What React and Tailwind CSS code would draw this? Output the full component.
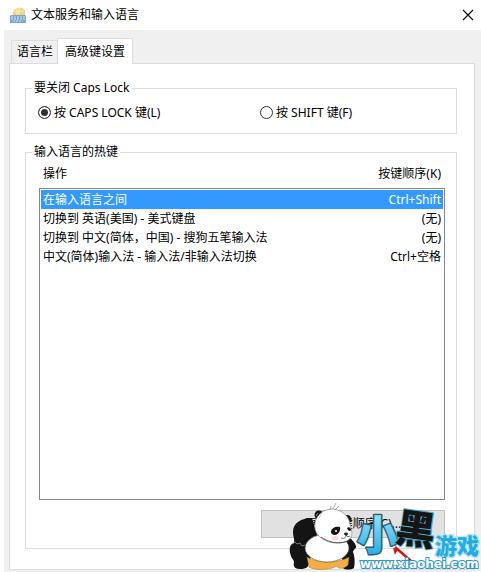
import { useState } from 'react';
import clsx from 'clsx';

const TABS = ['语言栏', '高级键设置'];

const HOTKEYS = [
  { action: '在输入语言之间', keys: 'Ctrl+Shift' },
  { action: '切换到 英语(美国) - 美式键盘', keys: '(无)' },
  { action: '切换到 中文(简体，中国) - 搜狗五笔输入法', keys: '(无)' },
  { action: '中文(简体)输入法 - 输入法/非输入法切换', keys: 'Ctrl+空格' },
];

function KeyboardIcon() {
  return (
    <svg width="17" height="17" viewBox="0 0 17 17" aria-hidden="true">
      <path d="M3 8c-1-4 2-7 6-7 4-1 7 2 6 7z" fill="#f3d27c" />
      <path d="M4 5l10-1M9 1v7M6 2c2 2 2 4 0 6" stroke="#fdf0c0" fill="none" />
      <path d="M0 9l1-1h14l1 1v7H0z" fill="#7ba6cc" />
      <path d="M1 10h14M1 12h14M3 14h10" stroke="#cfe3f4" strokeDasharray="2 1" />
    </svg>
  );
}

function Radio({ value, checked, onChange, children }) {
  return (
    <label className="flex h-[17px] items-center gap-[3px]">
      <input
        type="radio"
        name="caps"
        value={value}
        checked={checked}
        onChange={() => onChange(value)}
        className="size-[13px] appearance-none rounded-full border border-[#333] bg-white checked:bg-[#333] checked:shadow-[inset_0_0_0_2px_white]"
      />
      {children}
    </label>
  );
}

function Panda() {
  return (
    <g>
      <path d="M24 17C13 17 5 22 5 31c0 5 2 8 1 11-5 1-5 8-3 13 1 3 3 4 3 6-1 4 0 7 6 7 7 0 9-2 9-8L31 40z" fill="#141414" />
      <path d="M58 36c5 0 9 6 10 9 1 2-3 4-3 6 2 5 2 12 1 16-3 2-9 2-11 0L53 45z" fill="#141414" />
      <path d="M4 43l3-2 2 2 3-1 2 3 3-1" stroke="#999" strokeWidth=".7" fill="none" />
      <path d="M19 56c8 6 31 7 42 0l-1 8c-2 2-5 4-9 3l-3-2-3 2c-8 2-20 2-24-1z" fill="#f3ae46" stroke="#9b6a25" strokeWidth=".5" />
      <ellipse cx="39" cy="47" rx="22" ry="14" fill="#fff" stroke="#444" strokeWidth=".6" />
      <circle cx="31" cy="14" r="4.5" fill="#141414" />
      <circle cx="59" cy="18" r="4" fill="#141414" />
      <path d="M27 22c2-9 9-14 18-14 9 1 16 7 17 15l2 9c0 7-7 10-15 10-14 0-24-9-22-20z" fill="#fff" stroke="#777" strokeWidth=".6" />
      <path d="M33 36c8 6 20 8 29 3" stroke="#333" strokeWidth=".8" fill="none" />
      <path d="M42 9l1-4M45 8l3-6M47 9l4-4" stroke="#888" strokeWidth=".7" />
      <path d="M31 17l3-5M28 15l2-3" stroke="#bbb" strokeWidth=".7" />
      <path d="M43 31c0-4 5-6 9-5 1 4-2 8-5 8-2 0-4-1-4-3z" fill="#141414" />
      <path d="M59 27c2-2 4 0 4 2-1 2-3 1-4-2z" fill="#141414" />
      <circle cx="48" cy="30" r="1" fill="#fff" />
      <ellipse cx="58" cy="33" rx="2" ry="1.4" fill="#222" />
      <path d="M53 37c3 1 5 0 5-3 1 2 3 2 4 1" stroke="#333" strokeWidth=".7" fill="none" />
      <ellipse cx="47" cy="37" rx="3.5" ry="2" fill="#ffd3d3" />
    </g>
  );
}

function Watermark() {
  return (
    <svg
      className="pointer-events-none absolute right-0 bottom-0 font-['Noto_Sans_CJK_SC',sans-serif]"
      width="193"
      height="72"
      viewBox="0 0 193 72"
    >
      <defs>
        <linearGradient id="ice" x1="0" y1="0" x2="0" y2="1">
          <stop offset="0" stopColor="#b4f0ff" />
          <stop offset="1" stopColor="#1ba3de" />
        </linearGradient>
      </defs>
      <Panda />
      <path d="M107 46l16 14" stroke="#d4161c" strokeWidth="2.5" />
      <path d="M105 47l5 1-3 6z" fill="#d4161c" />
      <g fontWeight="900" strokeLinejoin="round" paintOrder="stroke">
        <text x="69" y="49" fontSize="41" fill="url(#ice)" stroke="#256078" strokeWidth="3">小</text>
        <text
          x="108"
          y="43"
          fontSize="40"
          fill="#151515"
          stroke="#4fa9c8"
          strokeWidth="2"
          transform="rotate(8 128 28)"
        >
          黑
        </text>
        <text x="147" y="53" fontSize="22" fill="#23abe2" stroke="#b9e6f5" strokeWidth="3">游戏</text>
      </g>
      <text
        x="72"
        y="67"
        fontSize="12"
        fontWeight="700"
        fill="#fff"
        stroke="#2d98c3"
        strokeWidth="2"
        paintOrder="stroke"
        className="font-['DejaVu_Sans',sans-serif]"
      >
        www.xiaohei.com
      </text>
    </svg>
  );
}

export default function App() {
  const [tab, setTab] = useState(1);
  const [caps, setCaps] = useState('caps');
  const [selected, setSelected] = useState(0);

  return (
    <div className="relative flex min-h-screen flex-col bg-white font-['Noto_Sans','Noto_Sans_CJK_SC',sans-serif] text-xs text-black">
      <header className="flex h-[30px] items-center gap-1 pr-1.5 pl-2.5">
        <KeyboardIcon />
        <h1 className="flex-1">文本服务和输入语言</h1>
        <button type="button" aria-label="关闭" className="p-px">
          <svg width="12" height="12" viewBox="0 0 12 12" stroke="#111" strokeWidth="1.2">
            <path d="M1 1l10 10M11 1L1 11" />
          </svg>
        </button>
      </header>

      <main className="ml-1 flex flex-1 flex-col bg-[#f0f0f0] pt-2 pr-1.5 pb-[3px] pl-[5px]">
        <div role="tablist" className="flex items-end pl-0.5">
          {TABS.map((name, i) => (
            <button
              key={name}
              type="button"
              role="tab"
              aria-selected={tab === i}
              onClick={() => setTab(i)}
              className={clsx(
                'border border-[#dcdcdc] whitespace-nowrap',
                tab === i ? 'relative -mb-px h-[26px] border-b-0 bg-white px-[7px]' : 'h-[23px] border-r-0 border-b-0 pr-1 pl-[5px]',
              )}
            >
              {name}
            </button>
          ))}
        </div>

        <div role="tabpanel" className="flex flex-1 flex-col border border-[#dcdcdc] bg-white pt-4 pr-[17px] pb-5 pl-[15px]">
          <fieldset className="border border-[#dcdcdc] px-3 pt-2 pb-3">
            <legend className="-ml-1.5 h-4 px-0.5 leading-4">要关闭 Caps Lock</legend>
            <div className="grid grid-cols-[222px_1fr]">
              <Radio value="caps" checked={caps === 'caps'} onChange={setCaps}>按 CAPS LOCK 键(L)</Radio>
              <Radio value="shift" checked={caps === 'shift'} onChange={setCaps}>按 SHIFT 键(F)</Radio>
            </div>
          </fieldset>

          <fieldset className="mt-2.5 flex flex-1 flex-col border border-[#dcdcdc] pr-[11px] pb-2.5 pl-[13px]">
            <legend className="-ml-[7px] h-4 px-0.5 leading-4">输入语言的热键</legend>
            <div className="flex h-full flex-col pt-1">
              <div className="mb-1 flex justify-between px-1 leading-5">
                <span>操作</span>
                <span>按键顺序(K)</span>
              </div>
              <div className="min-h-[312px] flex-1 border border-[#828790] p-px">
                <table aria-label="输入语言的热键" className="w-full border-collapse">
                  <tbody>
                    {HOTKEYS.map(({ action, keys }, i) => (
                      <tr
                        key={action}
                        onClick={() => setSelected(i)}
                        className={clsx('h-[19px] leading-[19px]', selected === i && 'bg-[#3399ff] text-white')}
                      >
                        <td className="p-0 pl-0.5">{action}</td>
                        <td className="p-0 pr-0.5 text-right">{keys}</td>
                      </tr>
                    ))}
                  </tbody>
                </table>
              </div>
              <button type="button" className="mt-2.5 h-7 w-[184px] self-end border border-[#bfbfbf] bg-[#e1e1e1]">
                更改按键顺序(C)...
              </button>
            </div>
          </fieldset>
        </div>
      </main>

      <Watermark />
    </div>
  );
}
